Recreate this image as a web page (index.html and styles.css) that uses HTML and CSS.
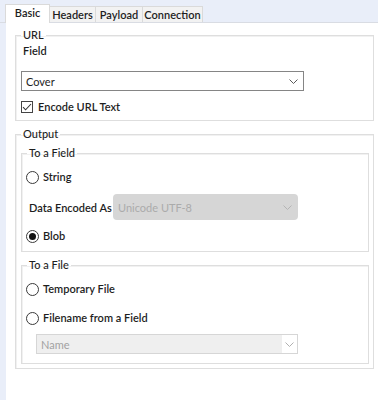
FILE: index.html
```html
<!DOCTYPE html>
<html>
<head>
<meta charset="utf-8">
<link rel="stylesheet" href="styles.css">
</head>
<body>
<div class="window">
  <div class="tabs">
    <div class="tab active w-basic">Basic</div>
    <div class="tab w-headers">Headers</div>
    <div class="tab w-payload">Payload</div>
    <div class="tab w-connection">Connection</div>
  </div>
  <div class="panel">
    <fieldset class="group url">
      <legend>URL</legend>
      <div class="label">Field</div>
      <div class="combo combo-cover">
        <span class="value">Cover</span>
        <svg class="chev" width="9" height="5" viewBox="0 0 9 5"><path d="M0.5 0.5L4.5 4.5L8.5 0.5" fill="none" stroke="#5a5a5a" stroke-width="1"/></svg>
      </div>
      <div class="check-row">
        <span class="checkbox"><svg width="10" height="10" viewBox="0 0 10 10"><path d="M1 5.2L3.6 7.8L9 2" fill="none" stroke="#333" stroke-width="1.1"/></svg></span>
        <span>Encode URL Text</span>
      </div>
    </fieldset>

    <fieldset class="group output">
      <legend>Output</legend>
      <fieldset class="group sub to-field">
        <legend>To a Field</legend>
        <div class="radio-row"><span class="radio"></span><span>String</span></div>
        <div class="data-row">
          <span class="data-label">Data Encoded As</span>
          <div class="combo combo-disabled">
            <span class="value">Unicode UTF-8</span>
            <svg class="chev" width="9" height="5" viewBox="0 0 9 5"><path d="M0.5 0.5L4.5 4.5L8.5 0.5" fill="none" stroke="#b4b4b4" stroke-width="1"/></svg>
          </div>
        </div>
        <div class="radio-row blob"><span class="radio checked"></span><span>Blob</span></div>
      </fieldset>
      <fieldset class="group sub to-file">
        <legend>To a File</legend>
        <div class="radio-row"><span class="radio"></span><span>Temporary File</span></div>
        <div class="radio-row filename"><span class="radio"></span><span>Filename from a Field</span></div>
        <div class="combo combo-name">
          <span class="value">Name</span>
          <span class="btn"><svg class="chev" width="9" height="5" viewBox="0 0 9 5"><path d="M0.5 0.5L4.5 4.5L8.5 0.5" fill="none" stroke="#b0b0b0" stroke-width="1"/></svg></span>
        </div>
      </fieldset>
    </fieldset>
  </div>
</div>
</body>
</html>
```

FILE: styles.css
```css
html, body {
  margin: 0;
  padding: 0;
}
body {
  background: #e9eef9;
  font-family: "Lato", "Liberation Sans", sans-serif;
  font-size: 11px;
  font-weight: 600;
  color: #1e1e1e;
  width: 378px;
  height: 400px;
  overflow: hidden;
}
.window {
  display: flex;
  flex-direction: column;
  height: 400px;
}
.tabs {
  display: flex;
  align-items: flex-end;
  height: 22px;
  padding-left: 5px;
  border-bottom: 1px solid #d9dce3;
  box-sizing: content-box;
}
.tab {
  box-sizing: border-box;
  height: 16px;
  line-height: 15px;
  text-align: center;
  background: #f2f2f2;
  border: 1px solid #dadada;
  border-bottom: none;
  border-left: none;
}
.tab.active {
  height: 19px;
  line-height: 16px;
  background: #ffffff;
  border-left: 1px solid #dadada;
  margin-bottom: -1px;
}
.w-basic { width: 45px; }
.w-headers { width: 46px; }
.w-payload { width: 47px; }
.w-connection { width: 60px; }

.panel {
  flex: 1;
  margin-left: 6px;
  background: #ffffff;
  padding: 5px 4px 0 9px;
  display: flex;
  flex-direction: column;
}
.group {
  margin: 0;
  min-width: 0;
  border: 1px solid #dedede;
  box-shadow: inset 1px 1px 0 #f1f1f1;
}
.group legend {
  padding: 0 2px;
  line-height: 14px;
  font-weight: 500;
}
.url {
  padding: 2px 5px 6px 5px;
}
.label {
  line-height: 14px;
  margin-left: 2px;
}
.combo {
  box-sizing: border-box;
  display: flex;
  align-items: center;
  justify-content: space-between;
  font-weight: 400;
}
.combo-cover {
  width: 283px;
  height: 20px;
  margin-top: 13px;
  border: 1px solid #858585;
  padding: 0 5px 0 4px;
}
.chev { display: block; }
.check-row {
  display: flex;
  align-items: center;
  margin-top: 9px;
  line-height: 14px;
  gap: 5px;
}
.checkbox {
  box-sizing: border-box;
  width: 12px;
  height: 12px;
  border: 1px solid #444;
  display: flex;
  align-items: center;
  justify-content: center;
}
.checkbox svg { display: block; }

.output {
  margin-top: 6px;
  padding: 5px 4px 4px 5px;
}
.sub {
  padding: 10px 4px 8px 4px;
}
.sub legend {
  margin-left: 1px;
}
.to-file {
  margin-top: 6px;
  padding-bottom: 9px;
}
.radio-row {
  display: flex;
  align-items: center;
  gap: 4px;
  line-height: 14px;
}
.radio {
  box-sizing: border-box;
  width: 13px;
  height: 13px;
  border: 1px solid #3a3a3a;
  border-radius: 50%;
  display: flex;
  align-items: center;
  justify-content: center;
}
.radio.checked::after {
  content: "";
  width: 7px;
  height: 7px;
  border-radius: 50%;
  background: #111;
}
.data-row {
  display: flex;
  align-items: center;
  margin-top: 10px;
}
.data-label {
  width: 84px;
  margin-left: 3px;
}
.combo-disabled {
  width: 185px;
  height: 26px;
  background: #d6d6d6;
  border-radius: 4px;
  color: #ababab;
  padding: 0 6px 0 5px;
}
.blob {
  margin-top: 9px;
}
.filename {
  margin-top: 15px;
}
.combo-name {
  width: 262px;
  height: 20px;
  margin-top: 9px;
  margin-left: 10px;
  border: 1px solid #d6d6d6;
  background: #efefef;
  color: #a2a2a2;
  padding: 0 0 0 4px;
}
.combo-name .btn {
  width: 15px;
  height: 18px;
  background: #ffffff;
  display: flex;
  align-items: center;
  justify-content: center;
}
```
